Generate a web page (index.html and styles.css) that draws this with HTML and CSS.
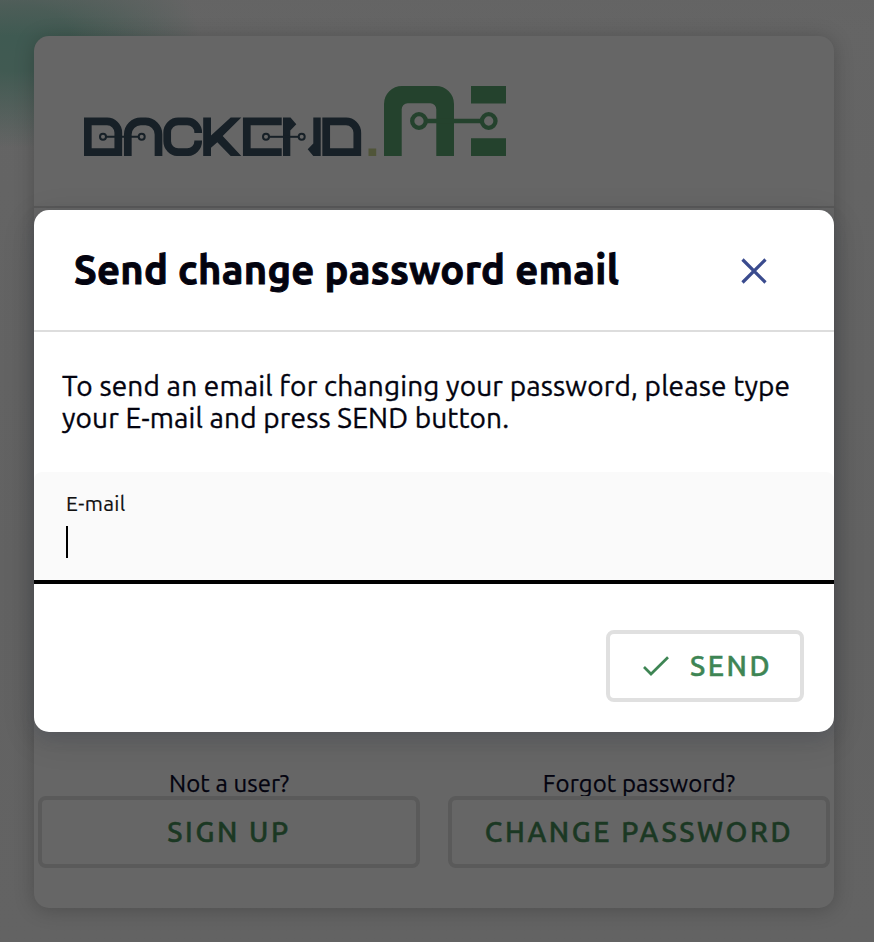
FILE: index.html
```html
<!DOCTYPE html>
<html lang="en">
<head>
<meta charset="utf-8">
<title>Backend.AI</title>
<link rel="stylesheet" href="styles.css">
</head>
<body>
<main class="login-card">
  <header class="brand">
    <svg class="logo" viewBox="84 86 422 70" role="img" aria-label="Backend.AI">
      <g class="navy-line">
        <path d="M87.8 121.4H107a11.3 11.3 0 0 1 11.3 11.3v19.5H87.8z"/>
        <path d="M127.8 156v-21.6a13 13 0 0 1 13-13h4.7a13 13 0 0 1 13 13V156"/>
        <path d="M198.2 133v-.6a11 11 0 0 0-11-11h-9a11 11 0 0 0-11 11v8.8a11 11 0 0 0 11 11h9a11 11 0 0 0 11-11v-.6"/>
        <path d="M281.7 121.4h-34.9v30.8h34.9"/>
        <path d="M326.2 121.4H346a11.3 11.3 0 0 1 11.3 11.3v19.5h-31.1z"/>
      </g>
      <g class="navy-fill">
        <path d="M203.2 117.6h7.8v17.8l19.7-17.8h10.6L222.7 136l18.6 20h-10.6l-13.4-13.7-6.3 5.5v8.2h-7.8z"/>
        <path d="M283 117.6h7.5l5.8 6.7-6 6.2V156H283z"/>
        <path d="M313.3 117.6h7.4V156h-7.4l-5.6-6.7 5.6-5.8z"/>
      </g>
      <g class="navy-wire">
        <circle cx="103" cy="136.8" r="3"/><path d="M106 136.8h32.7"/><circle cx="141.7" cy="136.8" r="3"/>
        <circle cx="266" cy="136.8" r="3"/><path d="M269 136.8h29.7"/><circle cx="301.7" cy="136.8" r="3"/>
      </g>
      <path class="dot" d="M368.5 148.5h7.7v7.5h-7.7z"/>
      <path class="green-fill" d="M384 156v-52a18 18 0 0 1 18-18h34a18 18 0 0 1 18 18v52h-17.7v-46.7a6 6 0 0 0-6-6h-22.6a6 6 0 0 0-6 6V156zM471 86h35v17.6h-35zM471 138.3h35V156h-35z"/>
      <g class="green-wire">
        <circle cx="419" cy="121" r="6.8"/><path d="M426 121h55.7"/><circle cx="488.7" cy="121" r="6.8"/>
      </g>
    </svg>
  </header>
  <div class="account-actions">
    <section class="action"><span>Not a user?</span><button class="dim-button">SIGN UP</button></section>
    <section class="action"><span>Forgot password?</span><button class="dim-button">CHANGE PASSWORD</button></section>
  </div>
</main>
<div class="dialog" role="dialog" aria-labelledby="title">
  <header class="dialog-head">
    <h1 id="title">Send change password email</h1>
    <svg class="close" viewBox="0 0 26 26"><path d="M1.5 1.5l23 23M24.5 1.5l-23 23"/></svg>
  </header>
  <p class="message">To send an email for changing your password, please type<br>your E-mail and press SEND button.</p>
  <div class="field"><label>E-mail</label><i class="caret"></i></div>
  <footer class="dialog-foot">
    <button class="send"><svg class="check" viewBox="0 0 26 20"><path d="M1 11l7 7L25 1.3"/></svg><span class="send-label">SEND</span></button>
  </footer>
</div>
</body>
</html>
```
FILE: styles.css
```css
* { box-sizing: border-box; }
body {
  margin: 0;
  width: 874px;
  height: 942px;
  padding: 36px 40px 34px 34px;
  overflow: hidden;
  position: relative;
  font-family: Ubuntu, "Noto Sans", sans-serif;
  color: #03030f;
  background:
    linear-gradient(rgba(99, 99, 99, .4), rgba(99, 99, 99, 0) 36px),
    radial-gradient(ellipse 185px 110px at 15px 38px, #3f5a52 0%, #415a52 30%, rgba(65, 90, 82, .5) 65%, rgba(99, 99, 99, 0) 100%),
    linear-gradient(#656565, #626262 60%, #636363);
}
button { font-family: inherit; background: none; margin: 0; }
.login-card {
  height: 872px;
  display: flex;
  flex-direction: column;
  justify-content: space-between;
  border-radius: 15px;
  background: #666;
  box-shadow: 0 2px 20px rgba(0, 0, 0, .22);
}
.brand {
  height: 172px;
  padding: 50px;
  border-bottom: 2px solid #595959;
}
.logo { display: block; width: 422px; height: 70px; }
.navy-line { fill: none; stroke: #172027; stroke-width: 7.7; }
.navy-fill { fill: #172027; }
.navy-wire { fill: none; stroke: #172027; stroke-width: 2; }
.dot { fill: #505539; }
.green-fill { fill: #24422d; }
.green-wire { fill: none; stroke: #24422d; stroke-width: 4.3; }
.account-actions {
  display: flex;
  gap: 28px;
  padding: 0 4px 40px;
}
.action {
  flex: 1;
  display: flex;
  flex-direction: column;
  align-items: center;
  font-size: 24px;
  line-height: 24px;
  letter-spacing: .1px;
  white-space: nowrap;
  -webkit-text-stroke: .25px;
}
.dim-button {
  width: 100%;
  height: 72px;
  border: 4px solid #5a5a5a;
  border-radius: 8px;
  color: #1b3823;
  font-size: 28px;
  font-weight: 500;
  letter-spacing: 2.6px;
  padding: 0 0 2px;
  -webkit-text-stroke: .5px;
}
.dialog {
  position: absolute;
  left: 34px;
  top: 210px;
  width: 800px;
  height: 522px;
  border-radius: 15px;
  background: #fff;
  box-shadow: 0 8px 34px rgba(0, 0, 0, .12), 0 6px 14px rgba(76, 84, 98, .3);
}
.dialog-head {
  height: 122px;
  padding: 0 67px 0 40px;
  display: flex;
  align-items: center;
  justify-content: space-between;
  border-bottom: 2px solid #ddd;
}
h1 {
  margin: 0;
  font-size: 40px;
  line-height: 48px;
  letter-spacing: .3px;
  white-space: nowrap;
  -webkit-text-stroke: .9px;
}
.close { width: 26px; height: 26px; margin-top: 2px; fill: none; stroke: #3a4b8e; stroke-width: 3.2; }
.message {
  margin: 0;
  height: 140px;
  padding: 38px 28px 0;
  font-size: 28px;
  line-height: 32px;
  letter-spacing: .15px;
  white-space: nowrap;
  -webkit-text-stroke: .35px;
}
.field {
  height: 112px;
  padding: 19px 32px 0;
  display: flex;
  flex-direction: column;
  border-bottom: 4px solid #000;
  border-radius: 8px 8px 0 0;
  background: #fafafa;
  color: #111;
  font-size: 21px;
  line-height: 24px;
  letter-spacing: .4px;
  -webkit-text-stroke: .2px;
}
.caret { width: 2px; height: 32px; margin-top: 11px; background: #000; }
.dialog-foot { display: flex; justify-content: flex-end; padding: 46px 30px 0; }
.send {
  display: flex;
  align-items: center;
  gap: 21px;
  width: 198px;
  height: 72px;
  padding: 0 0 0 33px;
  border: 4px solid #e0e0e0;
  border-radius: 8px;
  color: #3e8554;
  font-size: 28px;
  font-weight: 500;
  letter-spacing: 2.6px;
  -webkit-text-stroke: .5px;
}
.send-label { padding-bottom: 2px; }
.check { width: 26px; height: 20px; fill: none; stroke: #3e8554; stroke-width: 2.7; }
```
